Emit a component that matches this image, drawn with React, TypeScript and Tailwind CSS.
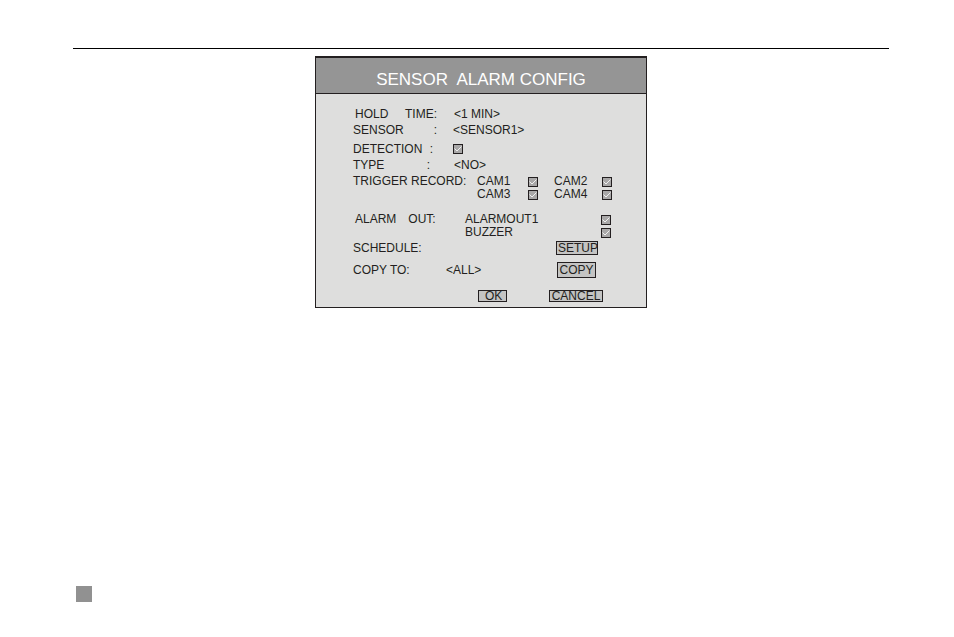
import React, { useState } from 'react';
import clsx from 'clsx';

type CheckBoxProps = {
  id: string;
};

const CheckBox: React.FC<CheckBoxProps> = ({ id }) => {
  const [checked, setChecked] = useState(true);

  return (
    <span className="relative block w-[10px] h-[10px] shrink-0">
      <input
        id={id}
        type="checkbox"
        checked={checked}
        onChange={(e) => setChecked(e.target.checked)}
        className="block w-full h-full appearance-none border border-[#231f20] bg-[#a9a8a8]"
      />
      {checked && (
        <svg
          viewBox="0 0 10 10"
          className="absolute inset-0 w-full h-full pointer-events-none"
          fill="none"
          stroke="#f0f0f0"
          strokeWidth="1"
        >
          <path d="M1.5 4.5 L4 7 L8.5 2.5" />
        </svg>
      )}
    </span>
  );
};

type OptionFieldProps = {
  id: string;
  value: string;
};

const OptionField: React.FC<OptionFieldProps> = ({ id, value }) => (
  <select id={id} defaultValue={value} className="block h-4 p-0 leading-4 appearance-none bg-transparent">
    <option value={value}>{`<${value}>`}</option>
  </select>
);

type PanelButtonProps = {
  className?: string;
  children: React.ReactNode;
};

const PanelButton: React.FC<PanelButtonProps> = ({ className, children }) => (
  <button
    type="button"
    className={clsx(
      'flex items-center border border-[#231f20] bg-[#c4c4c3] leading-3 whitespace-nowrap',
      className
    )}
  >
    {children}
  </button>
);

const App: React.FC = () => {
  return (
    <div className="flex flex-col min-h-screen bg-white pt-12 pb-[35px] pl-[73px] pr-[65px] font-['Liberation_Sans',Arial,sans-serif] text-[12px] text-[#231f20]">
      <hr className="border-0 h-px w-full bg-black" />

      <form className="w-full max-w-[332px] mx-auto mt-[7px] border border-t-2 border-[#231f20] bg-[#dededd]">
        <h1 className="h-9 pt-[10px] border-b border-[#231f20] bg-[#959595] text-center text-[17px] leading-6 text-white whitespace-pre">
          SENSOR  ALARM CONFIG
        </h1>

        <div className="pt-3 pb-[5px] pl-[37px] pr-[34px] leading-4">
          <div className="flex h-4 items-center">
            <label htmlFor="hold-time" className="flex justify-between w-[84px] pl-0.5">
              <span>HOLD</span>
              <span>TIME:</span>
            </label>
            <span className="ml-[17px]">
              <OptionField id="hold-time" value="1 MIN" />
            </span>
          </div>

          <div className="flex h-4 items-center">
            <label htmlFor="sensor" className="flex justify-between w-[84px]">
              <span>SENSOR</span>
              <span>:</span>
            </label>
            <span className="ml-4">
              <OptionField id="sensor" value="SENSOR1" />
            </span>
          </div>

          <div className="flex h-4 items-center mt-[3px]">
            <label htmlFor="detection" className="flex justify-between w-20">
              <span>DETECTION</span>
              <span>:</span>
            </label>
            <span className="ml-5">
              <CheckBox id="detection" />
            </span>
          </div>

          <div className="flex h-4 items-center">
            <label htmlFor="type" className="flex justify-between w-[77px]">
              <span>TYPE</span>
              <span>:</span>
            </label>
            <span className="ml-6">
              <OptionField id="type" value="NO" />
            </span>
          </div>

          {/* recording triggers, two cameras per line */}
          <div role="group" aria-label="Trigger record" className="flex mt-0.5 leading-[13px]">
            <span className="w-[124px] whitespace-nowrap">TRIGGER RECORD:</span>
            <div className="grid grid-cols-[51px_26px_48px_10px] items-center">
              <label htmlFor="cam1">CAM1</label>
              <CheckBox id="cam1" />
              <label htmlFor="cam2">CAM2</label>
              <CheckBox id="cam2" />
              <label htmlFor="cam3">CAM3</label>
              <CheckBox id="cam3" />
              <label htmlFor="cam4">CAM4</label>
              <CheckBox id="cam4" />
            </div>
          </div>

          <div role="group" aria-label="Alarm out" className="flex mt-3 leading-[13px]">
            <span className="flex gap-3 w-[112px] pl-0.5">
              <span>ALARM</span>
              <span>OUT:</span>
            </span>
            <div className="grid grid-cols-[136px_10px] items-center">
              <label htmlFor="alarm-out">ALARMOUT1</label>
              <CheckBox id="alarm-out" />
              <label htmlFor="buzzer">BUZZER</label>
              <CheckBox id="buzzer" />
            </div>
          </div>

          <div className="flex items-center justify-between h-4 mt-px pr-[14px]">
            <span>SCHEDULE:</span>
            <PanelButton className="w-[42px] h-[14px] pl-px overflow-hidden">SETUP</PanelButton>
          </div>

          <div className="flex items-center h-4 mt-[6px]">
            <label htmlFor="copy-to" className="w-[93px]">
              COPY TO:
            </label>
            <OptionField id="copy-to" value="ALL" />
            <PanelButton className="justify-center w-[39px] h-4 ml-auto mr-4">COPY</PanelButton>
          </div>

          <div className="flex items-center justify-end mt-3 pr-[9px]">
            <PanelButton className="w-[29px] h-3 pl-1.5">OK</PanelButton>
            <PanelButton className="justify-center w-[54px] h-3 ml-[42px]">CANCEL</PanelButton>
          </div>
        </div>
      </form>

      <footer className="mt-auto pl-[3px]">
        <div className="size-4 bg-[#919191]" />
      </footer>
    </div>
  );
};

export default App;
